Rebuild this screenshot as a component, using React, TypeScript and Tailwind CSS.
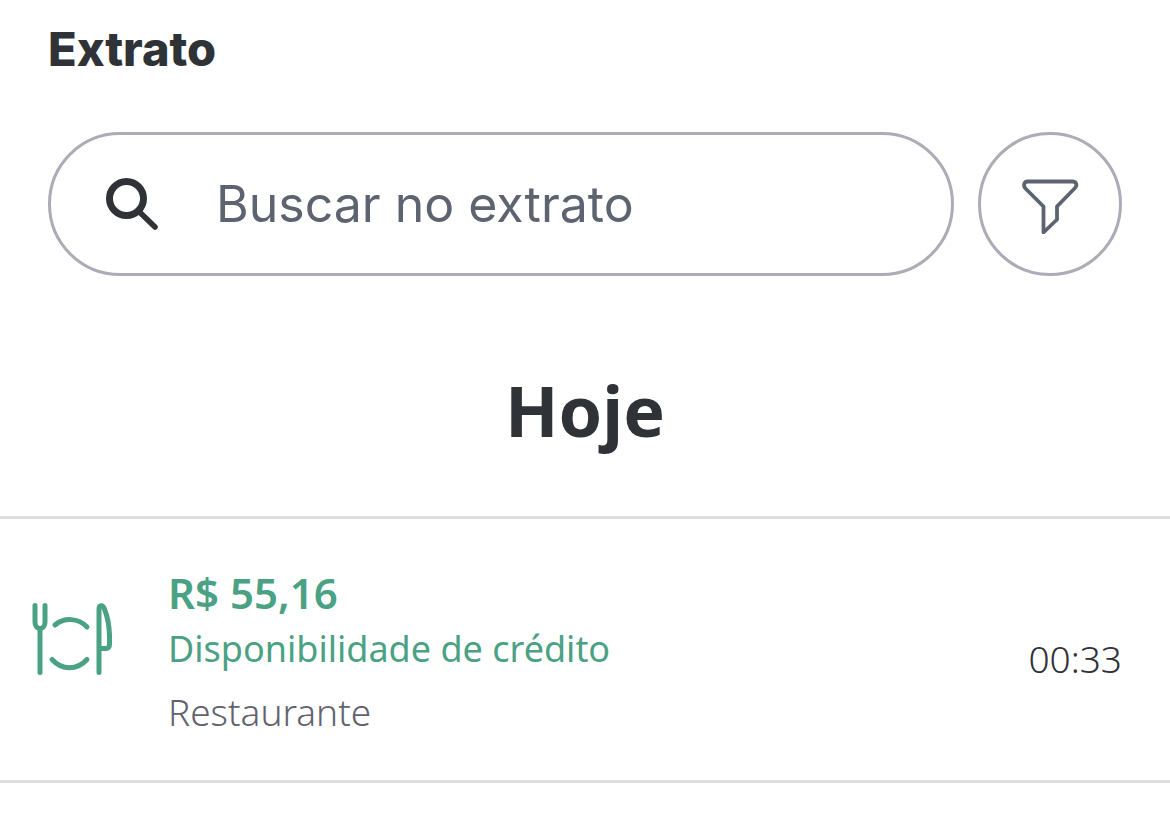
function SearchIcon() {
  return (
    <svg className="size-14 shrink-0" viewBox="0 0 56 56" fill="none" stroke="#2f3237" aria-hidden="true">
      <circle cx="22.5" cy="22.5" r="17" strokeWidth="7" />
      <path d="M35 35.500L51 51" strokeWidth="5.6" strokeLinecap="round" />
    </svg>
  );
}

function FilterIcon() {
  return (
    <svg className="size-15" viewBox="0 0 60 60" fill="none" stroke="#5d6470" strokeWidth="3.8" strokeLinejoin="round" aria-hidden="true">
      <path d="M7.500 7.500H52.500C56.500 7.500 57.500 11.500 55 14L37 32.500V45.500L23.500 58.500V32.500L5.500 14.500C3 12 4 7.500 7.500 7.500Z" />
    </svg>
  );
}

function RestaurantIcon() {
  return (
    <svg className="mb-7 h-18 w-20 shrink-0" viewBox="0 0 80 72" fill="none" stroke="#4aa184" strokeWidth="5" strokeLinecap="round" strokeLinejoin="round" aria-hidden="true">
      <path d="M3 2.5V19C3 23 5 25.5 8 25.5S13 23 13 19V2.5" />
      <path d="M8 26V69.5" />
      <path d="M23 22C32 14.500 46 14.500 55 24" />
      <path d="M20 56.500C30 67.500 45 67.500 55 56.500" />
      <path d="M67 69.500V6C67 2 70.500 1.500 72 5C76 14 78 26 77.500 41C77.500 44 76.500 45.500 74 45.500H67" />
    </svg>
  );
}

const transactions = [
  {
    amount: "R$ 55,16",
    description: "Disponibilidade de crédito",
    place: "Restaurante",
    time: "00:33",
  },
];

export default function StatementPage() {
  return (
    <main className="bg-white pb-12 font-['Noto_Sans',sans-serif] text-[#2f3237]">
      <header className="px-12 pt-6">
        <h1 className="font-['Inter',sans-serif] text-[47px] leading-[50px] font-extrabold">Extrato</h1>
      </header>

      <form className="flex items-center gap-6 px-12 pt-[58px]" role="search">
        <label className="flex h-36 min-w-0 flex-1 items-center gap-14 rounded-full border-3 border-[#acacb6] pl-[53px] pr-12">
          <SearchIcon />
          <input
            type="search"
            aria-label="Buscar no extrato"
            placeholder="Buscar no extrato"
            className="min-w-0 flex-1 bg-transparent font-['Inter',sans-serif] text-[50px] leading-[60px] outline-none placeholder:text-[#5d6470]"
          />
        </label>
        <button
          type="button"
          aria-label="Filtrar"
          className="flex size-36 shrink-0 items-center justify-center rounded-full border-3 border-[#acacb6]"
        >
          <FilterIcon />
        </button>
      </form>

      <section>
        <h2 className="pt-[86px] pb-[58px] text-center text-[70px] leading-[96px] font-bold">Hoje</h2>
        <ul className="border-t-3 border-[#dcdde0]">
          {transactions.map((item) => (
            <li key={item.time} className="flex items-center border-b-3 border-[#dcdde0] pt-[46px] pr-12 pb-10 pl-8">
              <RestaurantIcon />
              <div className="ml-14 flex-1">
                <p className="text-[42px] leading-[56px] font-semibold text-[#4aa184]">{item.amount}</p>
                <p className="text-[36px] leading-[56px] text-[#4aa184]">{item.description}</p>
                <p className="mt-[7px] text-[37px] leading-[56px] font-light text-[#62626e]">{item.place}</p>
              </div>
              <time className="mt-3 text-[37px] leading-[56px] font-light">{item.time}</time>
            </li>
          ))}
        </ul>
      </section>
    </main>
  );
}
